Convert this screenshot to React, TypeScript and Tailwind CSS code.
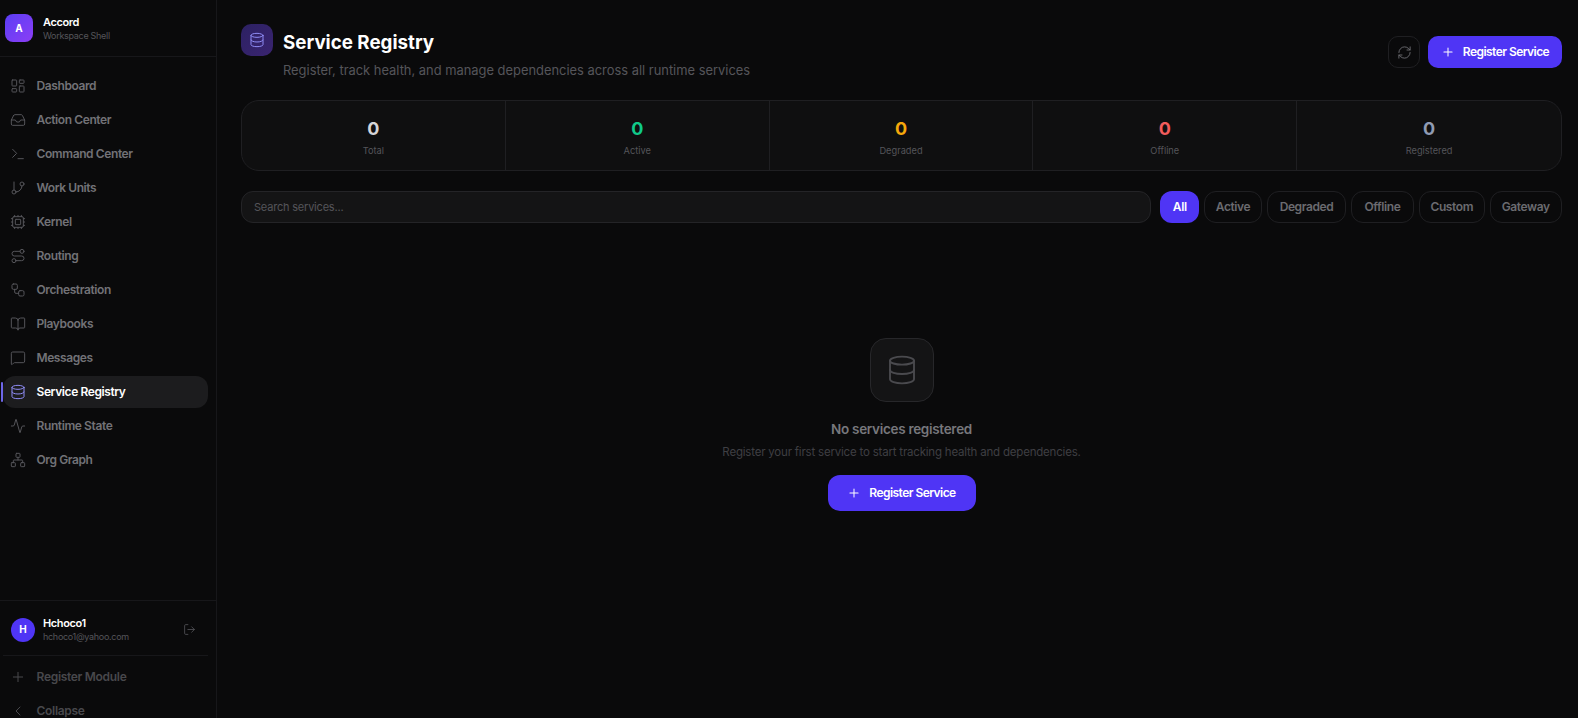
import React from 'react';
import {
  LayoutDashboard,
  Inbox,
  Terminal,
  GitBranch,
  Cpu,
  Route,
  Workflow,
  BookOpen,
  MessageSquare,
  Database,
  Activity,
  Network,
  LogOut,
  Plus,
  ChevronLeft,
  RefreshCw,
} from 'lucide-react';

const navItems = [
  { label: 'Dashboard', icon: LayoutDashboard },
  { label: 'Action Center', icon: Inbox },
  { label: 'Command Center', icon: Terminal },
  { label: 'Work Units', icon: GitBranch },
  { label: 'Kernel', icon: Cpu },
  { label: 'Routing', icon: Route },
  { label: 'Orchestration', icon: Workflow },
  { label: 'Playbooks', icon: BookOpen },
  { label: 'Messages', icon: MessageSquare },
  { label: 'Service Registry', icon: Database, active: true },
  { label: 'Runtime State', icon: Activity },
  { label: 'Org Graph', icon: Network },
];

const stats = [
  { label: 'Total', color: 'text-[#d4d4d8]' },
  { label: 'Active', color: 'text-[#10c98a]' },
  { label: 'Degraded', color: 'text-[#f5a80b]' },
  { label: 'Offline', color: 'text-[#f25c5c]' },
  { label: 'Registered', color: 'text-[#8f9bb3]' },
];

const filters = [
  { label: 'Active', width: 'w-[58.4px]' },
  { label: 'Degraded', width: 'w-[79.5px]' },
  { label: 'Offline', width: 'w-[63.4px]' },
  { label: 'Custom', width: 'w-[66.4px]' },
  { label: 'Gateway', width: 'w-[72.5px]' },
];

const Sidebar = () => {
  return (
    <aside className="w-[217px] h-[728px] shrink-0 flex flex-col border-r border-[#17171a] bg-[#0a0a0b]">
      <div className="h-[57px] shrink-0 flex items-center gap-[10px] pl-[5px] border-b border-[#17171a]">
        <div className="w-[28px] h-[28px] rounded-[8px] bg-gradient-to-br from-[#5a3df5] to-[#8b3df5] flex items-center justify-center text-[10px] font-bold text-white">
          A
        </div>
        <div>
          <div className="text-[11px] leading-[14px] font-semibold tracking-[-0.4px] text-white">Accord</div>
          <div className="text-[9px] leading-[13px] tracking-[-0.3px] text-[#55555a]">Workspace Shell</div>
        </div>
      </div>

      <nav className="flex-1 pt-[13px] flex flex-col gap-[2px]">
        {navItems.map((item) => {
          const Icon = item.icon;
          return (
            <div key={item.label} className="relative h-[32px] flex items-center">
              {item.active && (
                <div className="absolute left-[1px] top-[6px] bottom-[6px] w-[2px] rounded-full bg-[#6d66e8]" />
              )}
              <div
                className={
                  'ml-[3px] w-[205px] h-[32px] pl-[7px] flex items-center gap-[10.5px] rounded-[12px] text-[12px] font-semibold tracking-[-0.4px] ' +
                  (item.active ? 'bg-[#1c1c1e] text-white' : 'text-[#727277]')
                }
              >
                <Icon
                  size={16}
                  strokeWidth={1.5}
                  className={item.active ? 'text-[#8f8cf5]' : 'text-[#55555a]'}
                />
                <span>{item.label}</span>
              </div>
            </div>
          );
        })}
      </nav>

      <div className="border-t border-[#17171a]">
        <div className="mx-[3px] h-[55px] w-[205px] pl-[8px] pr-[12px] pt-[3px] flex items-center gap-[8px] border-b border-[#17171a]">
          <div className="w-[24px] h-[24px] rounded-full bg-[#4f35f5] flex items-center justify-center text-[10px] font-bold text-white">
            H
          </div>
          <div className="flex-1 min-w-0">
            <div className="text-[11px] leading-[14px] font-semibold tracking-[-0.4px] text-white">Hchoco1</div>
            <div className="text-[9px] leading-[13px] tracking-[-0.3px] text-[#55555a]">hchoco1@yahoo.com</div>
          </div>
          <LogOut size={13} strokeWidth={1.5} className="text-[#55555a]" />
        </div>
        <div className="mt-[4px] h-[34px] pl-[10px] flex items-center gap-[10.5px] text-[12px] font-semibold tracking-[-0.3px] text-[#48484c]">
          <Plus size={16} strokeWidth={1.5} />
          <span>Register Module</span>
        </div>
        <div className="h-[34px] pl-[10px] flex items-center gap-[10.5px] text-[12px] font-semibold tracking-[-0.3px] text-[#48484c]">
          <ChevronLeft size={16} strokeWidth={1.5} />
          <span>Collapse</span>
        </div>
      </div>
    </aside>
  );
};

const RegisterButton = ({ className }: { className: string }) => {
  return (
    <button className={'flex items-center justify-center gap-[8px] bg-[#4f35f5] text-white text-[12px] font-semibold tracking-[-0.55px] ' + className}>
      <Plus size={14} strokeWidth={1.75} />
      Register Service
    </button>
  );
};

export default function App() {
  return (
    <div
      className="w-[1578px] h-[718px] flex overflow-hidden bg-[#0a0a0b]"
      style={{ fontFamily: 'Inter, sans-serif' }}
    >
      <Sidebar />
      <main className="flex-1 min-w-0 pl-[24px] pr-[16px] pt-[24px] flex flex-col">
        <header className="flex items-start justify-between">
          <div>
            <div className="flex items-start gap-[10px]">
              <div className="w-[32px] h-[32px] rounded-[10px] bg-gradient-to-br from-[#2c2163] to-[#3a2470] flex items-center justify-center">
                <Database size={16} strokeWidth={1.5} className="text-[#8f8cf5]" />
              </div>
              <h1 className="mt-[2.5px] text-[18.75px] leading-[32px] font-bold text-white">Service Registry</h1>
            </div>
            <p className="mt-[3.5px] ml-[42px] text-[12.9px] leading-[18px] text-[#55555a]">
              Register, track health, and manage dependencies across all runtime services
            </p>
          </div>
          <div className="mt-[12px] flex items-center gap-[8px]">
            <button className="w-[32px] h-[32px] rounded-[10px] border border-[#1f1f22] flex items-center justify-center">
              <RefreshCw size={15} strokeWidth={1.5} className="text-[#6b6b70]" />
            </button>
            <RegisterButton className="w-[134px] h-[32px] rounded-[10px]" />
          </div>
        </header>

        <section className="mt-[20px] h-[71px] grid grid-cols-5 rounded-[18px] border border-[#1f1f22] bg-[#0f0f10] overflow-hidden">
          {stats.map((stat, i) => (
            <div
              key={stat.label}
              className={'flex flex-col items-center justify-center pt-[3px] ' + (i < stats.length - 1 ? 'border-r border-[#1f1f22]' : '')}
            >
              <div className={'text-[18px] leading-[24px] font-bold ' + stat.color}>0</div>
              <div className="mt-[3px] text-[9.25px] leading-[14px] text-[#55555a]">{stat.label}</div>
            </div>
          ))}
        </section>

        <section className="mt-[20px] flex items-center gap-[9px]">
          <div className="flex-1 h-[32px] rounded-[12px] border border-[#242427] bg-[#141415] pl-[12px] flex items-center text-[11px] tracking-[-0.2px] text-[#55555a]">
            Search services...
          </div>
          <div className="flex items-center gap-[4.5px]">
            <button className="h-[32px] w-[39.2px] rounded-[12px] bg-[#4f35f5] text-white text-[12px] font-semibold tracking-[-0.4px]">All</button>
            {filters.map((f) => (
              <button
                key={f.label}
                className={'h-[32px] rounded-[12px] border border-[#1f1f22] text-[#6b6b70] text-[12px] font-semibold tracking-[-0.4px] ' + f.width}
              >
                {f.label}
              </button>
            ))}
          </div>
        </section>

        <section className="mt-[115px] flex flex-col items-center">
          <div className="w-[64px] h-[64px] rounded-[16px] border border-[#27272a] bg-[#141415] flex items-center justify-center">
            <Database size={32} strokeWidth={1.4} className="text-[#4a4a4e]" />
          </div>
          <h3 className="mt-[17px] text-[13.5px] leading-[20px] font-semibold tracking-[-0.3px] text-[#77777c]">No services registered</h3>
          <p className="mt-[4px] text-[11.5px] leading-[18px] tracking-[-0.2px] text-[#3f3f43]">
            Register your first service to start tracking health and dependencies.
          </p>
          <RegisterButton className="mt-[14px] w-[148px] h-[36px] rounded-[12px]" />
        </section>
      </main>
    </div>
  );
}
